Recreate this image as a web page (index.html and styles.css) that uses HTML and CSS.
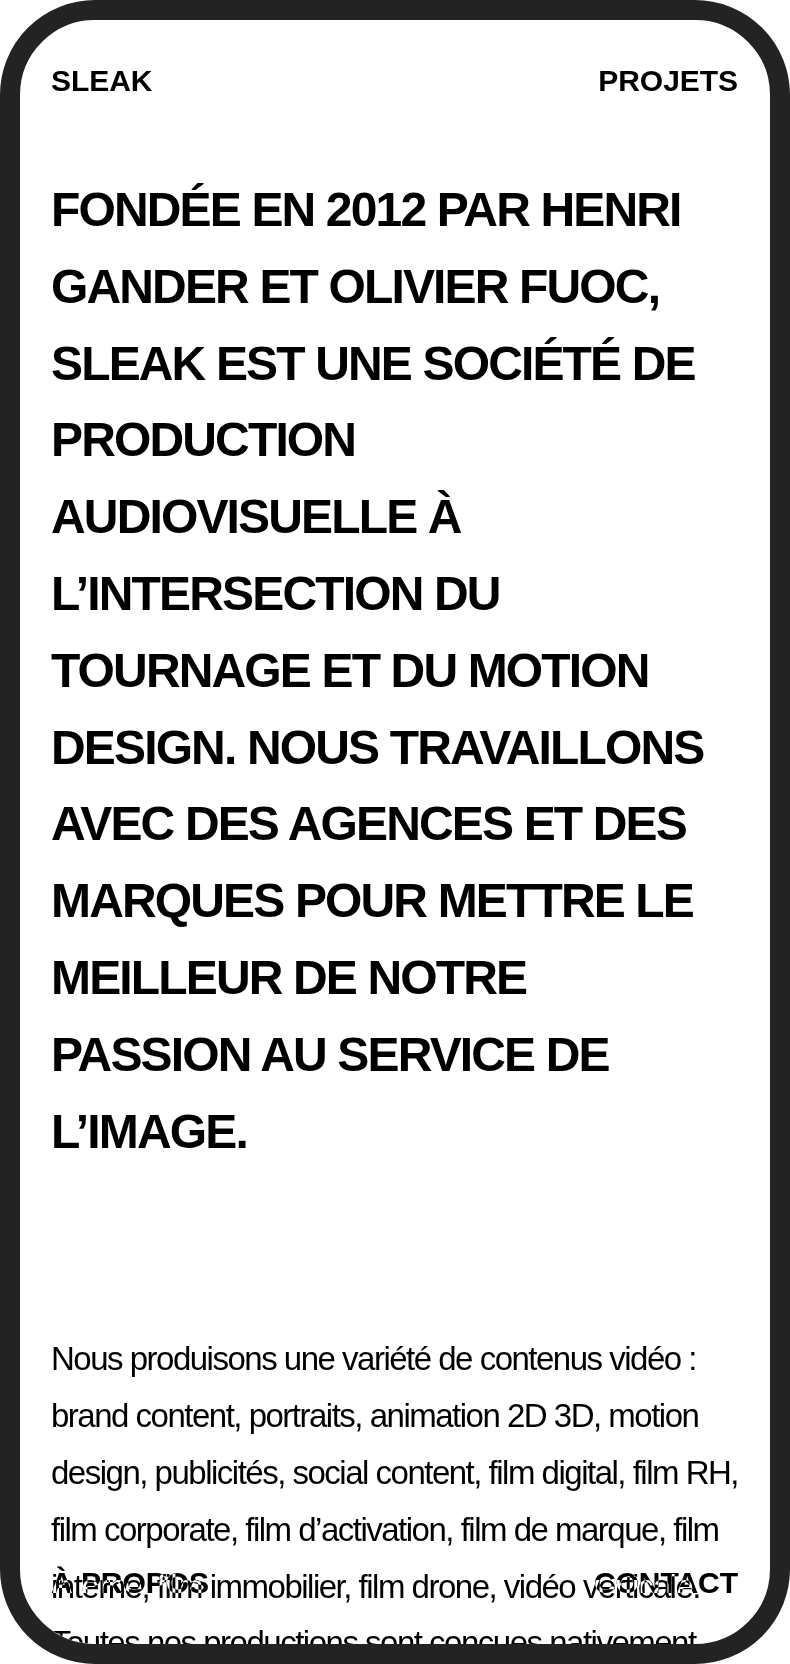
FILE: index.html
```html
<!DOCTYPE html>
<html lang="fr">
<head>
<meta charset="utf-8">
<title>Sleak</title>
<link rel="stylesheet" href="styles.css">
</head>
<body>
<div class="phone">
  <header class="topbar">
    <a class="nav-link" href="#">SLEAK</a>
    <a class="nav-link" href="#">PROJETS</a>
  </header>
  <main class="content">
    <h1 class="intro">FONDÉE EN 2012 PAR HENRI<br>GANDER ET OLIVIER FUOC,<br>SLEAK EST UNE SOCIÉTÉ DE<br>PRODUCTION<br>AUDIOVISUELLE À<br>L’INTERSECTION DU<br>TOURNAGE ET DU MOTION<br>DESIGN. NOUS TRAVAILLONS<br>AVEC DES AGENCES ET DES<br>MARQUES POUR METTRE LE<br>MEILLEUR DE NOTRE<br>PASSION AU SERVICE DE<br>L’IMAGE.</h1>
    <div class="services">
      <p class="services-text">Nous produisons une variété de contenus vidéo :<br>brand content, portraits, animation 2D 3D, motion<br>design, publicités, social content, film digital, film RH,<br>film corporate, film d’activation, film de marque, film<br>interne, film immobilier, film drone, vidéo verticale.</p>
      <p class="services-text">Toutes nos productions sont conçues nativement<br>pour tous les formats et toutes les plateformes.</p>
    </div>
  </main>
  <footer class="bottombar">
    <a class="nav-link" href="#">À PROPOS</a>
    <a class="nav-link" href="#">CONTACT</a>
  </footer>
</div>
</body>
</html>
```
FILE: styles.css
```css
html, body {
  margin: 0;
  padding: 0;
  background: #ffffff;
}

.phone {
  position: relative;
  box-sizing: border-box;
  height: 1664px;
  border: 20px solid #232323;
  border-radius: 95px;
  background: #ffffff;
  overflow: hidden;
  color: #000000;
  font-family: "Liberation Sans", Arial, sans-serif;
}

.topbar,
.bottombar {
  display: flex;
  justify-content: space-between;
  align-items: flex-start;
  padding: 0 32px 0 31px;
}

.topbar {
  padding-top: 46px;
}

.bottombar {
  position: absolute;
  left: 0;
  right: 0;
  bottom: 0;
  padding-bottom: 46px;
  color: #ffffff;
  mix-blend-mode: difference;
}

.nav-link {
  color: inherit;
  text-decoration: none;
  font-weight: 700;
  font-size: 30px;
  line-height: 30px;
  letter-spacing: -0.05px;
}

.content {
  padding: 0 32px 0 31px;
}

.intro {
  margin: 76px 0 0;
  font-weight: 700;
  font-size: 48px;
  line-height: 76.8px;
  letter-spacing: -1.85px;
  white-space: nowrap;
}

.services {
  margin-top: 161px;
}

.services-text {
  margin: 0;
  font-weight: 400;
  font-size: 33px;
  line-height: 56.8px;
  letter-spacing: -1.5px;
  white-space: nowrap;
}
```
